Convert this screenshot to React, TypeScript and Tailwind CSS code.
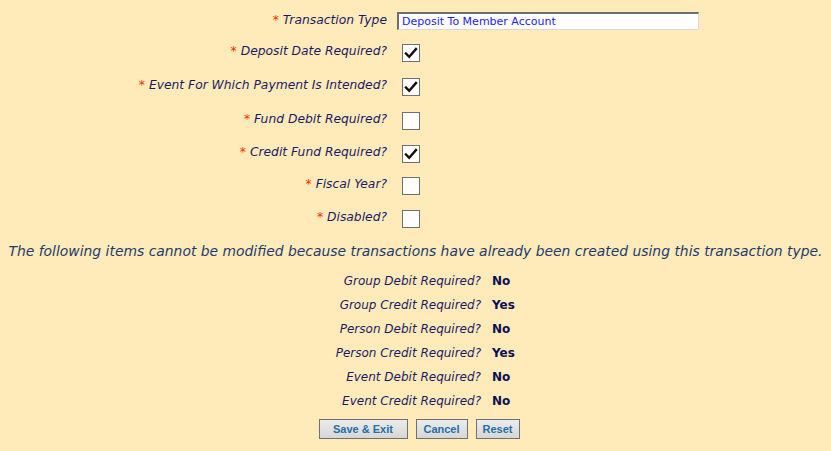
import React from "react";

const font = { fontFamily: '"DejaVu Sans", Verdana, sans-serif' };

function Check({ checked }: { checked: boolean }) {
  return (
    <div className="w-[18px] h-[18px] border border-[#707070] bg-white flex items-center justify-center ml-[5px]">
      {checked && (
        <svg width="14" height="12" viewBox="0 0 14 12">
          <path d="M2 6.5 L5.2 9.8 L12 2" fill="none" stroke="#111" strokeWidth="2.4" strokeLinecap="square" />
        </svg>
      )}
    </div>
  );
}

const checkRows: { label: string; checked: boolean; h: string }[] = [
  { label: "Deposit Date Required?", checked: true, h: "h-[34px]" },
  { label: "Event For Which Payment Is Intended?", checked: true, h: "h-[34px]" },
  { label: "Fund Debit Required?", checked: false, h: "h-[33px]" },
  { label: "Credit Fund Required?", checked: true, h: "h-[32px]" },
  { label: "Fiscal Year?", checked: false, h: "h-[33px]" },
  { label: "Disabled?", checked: false, h: "h-[33px]" },
];

const infoRows: [string, string][] = [
  ["Group Debit Required?", "No"],
  ["Group Credit Required?", "Yes"],
  ["Person Debit Required?", "No"],
  ["Person Credit Required?", "Yes"],
  ["Event Debit Required?", "No"],
  ["Event Credit Required?", "No"],
];

function Label({ children }: { children: React.ReactNode }) {
  return (
    <div className="w-[387px] text-right italic text-[12.3px] leading-[15px] text-[#1a1a66]">
      <span className="text-[#ff2a00] mr-[4px] not-italic">*</span>
      {children}
    </div>
  );
}

export default function App() {
  return (
    <div className="w-[831px] h-[451px] bg-[#ffebb9] pt-[10px]" style={font}>
      <div className="flex flex-col">
        <div className="flex h-[32px] items-start">
          <div className="pt-[3px]">
            <Label>Transaction Type</Label>
          </div>
          <div className="ml-[10px] mt-[2px] w-[302px] h-[18px] bg-white border-t-2 border-l-2 border-t-[#6e6e6e] border-l-[#6e6e6e] border-b border-r border-b-[#d8d8d8] border-r-[#d8d8d8] text-[11px] leading-[15px] text-[#1a1aff] pl-[3px]">
            Deposit To Member Account
          </div>
        </div>
        {checkRows.map((r) => (
          <div key={r.label} className={`flex items-start ${r.h}`}>
            <div className="pt-[2px]">
              <Label>{r.label}</Label>
            </div>
            <div className="ml-[10px] mt-[2px]">
              <Check checked={r.checked} />
            </div>
          </div>
        ))}
      </div>
      <div className="text-center italic text-[13.9px] leading-[18px] text-[#1c3a6e] mt-[1px]">
        The following items cannot be modified because transactions have already been created using this transaction type.
      </div>
      <div className="flex flex-col mt-[9px]">
        {infoRows.map(([l, v]) => (
          <div key={l} className="flex items-center h-[24px]">
            <div className="w-[481px] text-right italic text-[12px] text-[#1a1a66]">{l}</div>
            <div className="ml-[11px] font-bold text-[12px] text-[#0d0d55]">{v}</div>
          </div>
        ))}
      </div>
      <div className="flex justify-center gap-[8px] mt-[6px] pl-[7px]" style={{ fontFamily: '"Liberation Sans", Arial, sans-serif' }}>
        {["Save & Exit", "Cancel", "Reset"].map((b, i) => (
          <button
            key={b}
            className={`h-[20px] border border-[#707070] bg-gradient-to-b from-[#ececec] to-[#d6d6d6] text-[11px] font-bold text-[#1f6fa8] ${i === 0 ? "w-[89px]" : i === 1 ? "w-[52px]" : "w-[44px]"}`}
          >
            {b}
          </button>
        ))}
      </div>
    </div>
  );
}
